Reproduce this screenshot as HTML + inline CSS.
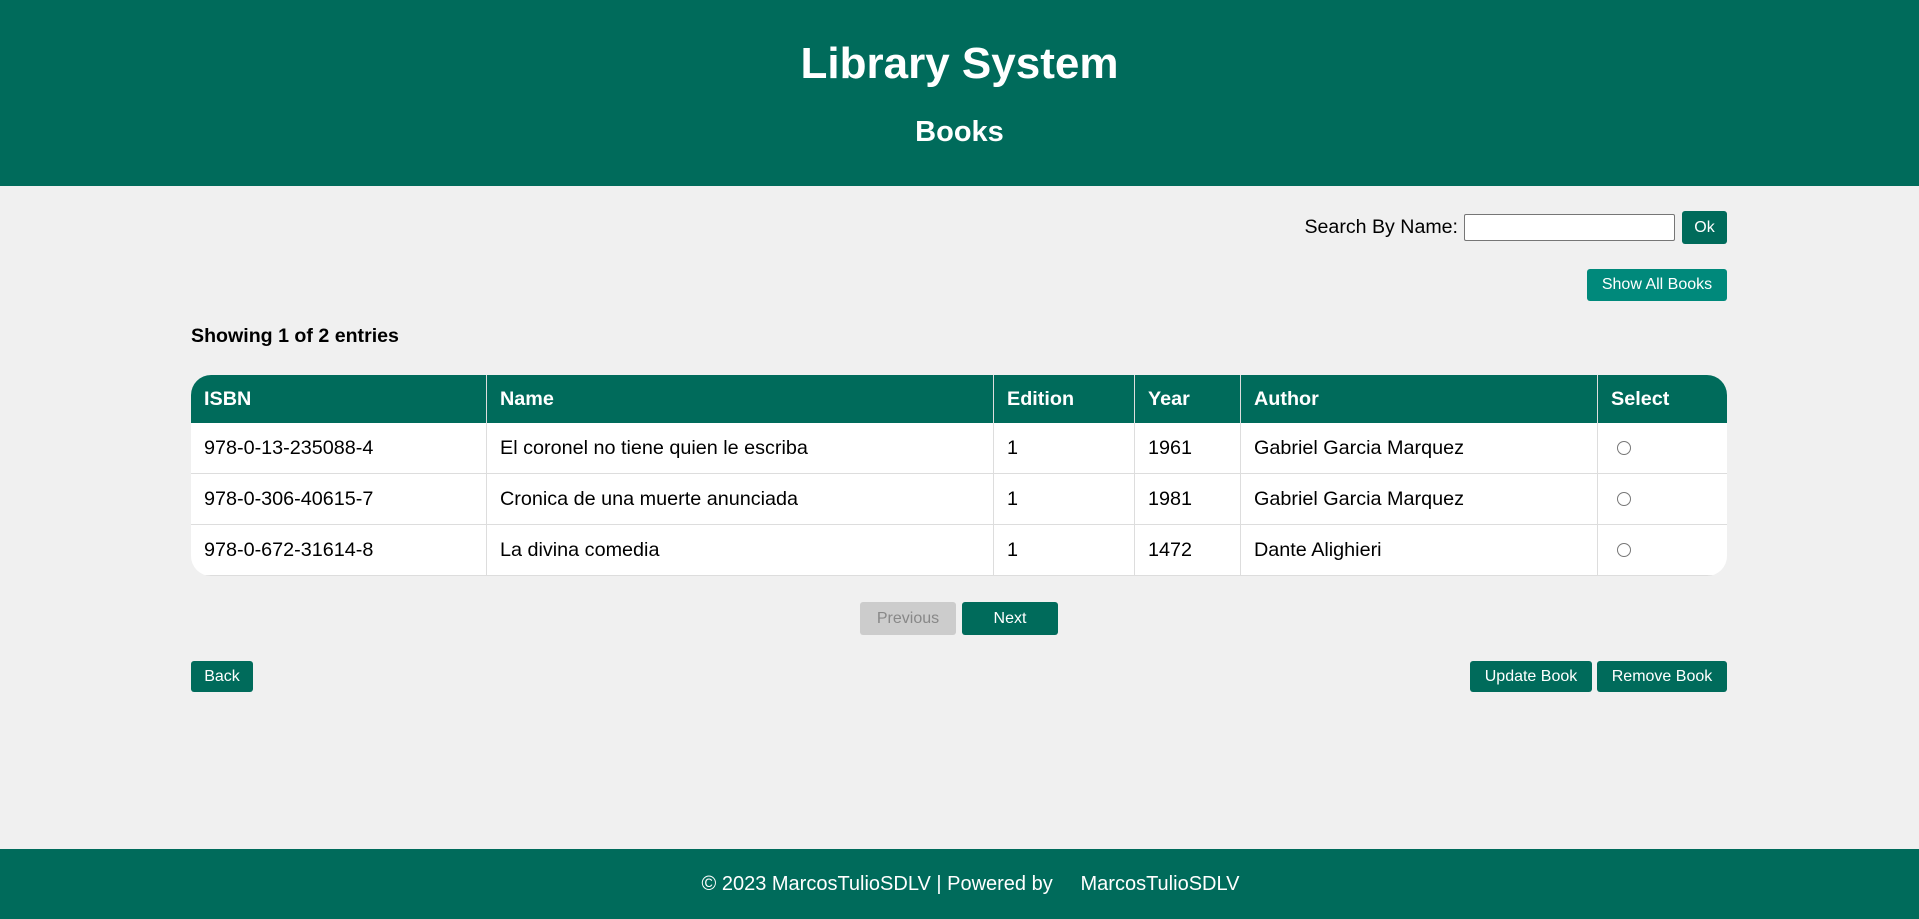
<!DOCTYPE html>
<html><head><meta charset="utf-8"><style>
*{box-sizing:border-box;margin:0;padding:0}
body{width:1919px;height:919px;background:#f0f0f0;font-family:"Liberation Sans",Arial,sans-serif;position:relative;overflow:hidden;color:#000}
.hdr{position:absolute;left:0;top:0;width:1919px;height:186px;background:#006b5b;color:#fff;text-align:center}
.hdr h1{position:absolute;top:37px;width:100%;font-size:44px;font-weight:bold;line-height:54px}
.hdr h2{position:absolute;top:115px;width:100%;font-size:29px;font-weight:bold;line-height:34px}
.btn{position:absolute;background:#006b5b;color:#fff;font-size:16px;border-radius:3px;display:flex;align-items:center;justify-content:center}
.abs{position:absolute}
table{position:absolute;left:191px;top:375px;width:1536px;border-collapse:separate;border-spacing:0;border-radius:20px;overflow:hidden;background:#fff;font-size:19.8px}
th{background:#006b5b;color:#fff;text-align:left;height:48px;padding-left:13px;font-weight:bold;border-right:1px solid #ddd}
td{height:51px;padding-left:13px;border-right:1px solid #ddd;border-bottom:1px solid #ddd}
th:last-child,td:last-child{border-right:none}
.radio{display:inline-block;width:14px;height:14px;border:1px solid #777;border-radius:50%;margin-left:6px;vertical-align:middle}
.ftr{position:absolute;left:0;top:849px;width:1919px;height:70px;background:#006b5b;color:#fff;font-size:20px;text-align:center;line-height:70px;padding-left:22px}
</style></head><body>
<div class="hdr"><h1>Library System</h1><h2>Books</h2></div>
<div class="abs" style="right:461px;top:214px;font-size:19.6px;line-height:26px">Search By Name:</div>
<div class="abs" style="left:1464px;top:214px;width:211px;height:27px;background:#fff;border:1px solid #767676;border-radius:2px"></div>
<div class="btn" style="left:1682px;top:211px;width:45px;height:33px">Ok</div>
<div class="btn" style="left:1587px;top:269px;width:140px;height:32px;background:#00897b">Show All Books</div>
<div class="abs" style="left:191px;top:323px;font-size:19.6px;font-weight:bold;line-height:26px">Showing 1 of 2 entries</div>
<table>
<colgroup><col style="width:296px"><col style="width:507px"><col style="width:141px"><col style="width:106px"><col style="width:357px"><col style="width:129px"></colgroup>
<tr><th>ISBN</th><th>Name</th><th>Edition</th><th>Year</th><th>Author</th><th>Select</th></tr>
<tr><td>978-0-13-235088-4</td><td>El coronel no tiene quien le escriba</td><td>1</td><td>1961</td><td>Gabriel Garcia Marquez</td><td><span class="radio"></span></td></tr>
<tr><td>978-0-306-40615-7</td><td>Cronica de una muerte anunciada</td><td>1</td><td>1981</td><td>Gabriel Garcia Marquez</td><td><span class="radio"></span></td></tr>
<tr><td>978-0-672-31614-8</td><td>La divina comedia</td><td>1</td><td>1472</td><td>Dante Alighieri</td><td><span class="radio"></span></td></tr>
</table>
<div class="btn" style="left:860px;top:602px;width:96px;height:33px;background:#ccc;color:#888">Previous</div>
<div class="btn" style="left:962px;top:602px;width:96px;height:33px">Next</div>
<div class="btn" style="left:191px;top:661px;width:62px;height:31px">Back</div>
<div class="btn" style="left:1470px;top:661px;width:122px;height:31px">Update Book</div>
<div class="btn" style="left:1597px;top:661px;width:130px;height:31px">Remove Book</div>
<div class="ftr">© 2023 MarcosTulioSDLV | Powered by &nbsp;&nbsp;&nbsp;&nbsp;MarcosTulioSDLV</div>
</body></html>
